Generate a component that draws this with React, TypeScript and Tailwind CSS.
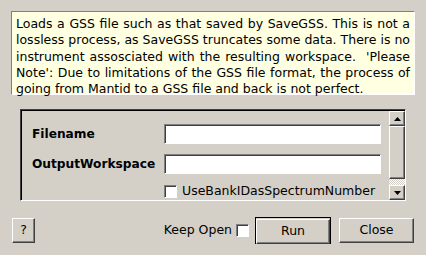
export default function App() {
  const raised =
    "border border-t-white border-l-white border-b-[#404040] border-r-[#404040] shadow-[inset_-1px_-1px_0_#808080]"
  const sunken =
    "border border-t-[#808080] border-l-[#808080] border-b-white border-r-white shadow-[inset_1px_1px_0_#404040]"

  return (
    <div
      className="w-[426px] h-[255px] bg-[#d4d0c8] text-black overflow-hidden flex flex-col"
      style={{ fontFamily: '"DejaVu Sans", sans-serif' }}
    >
      {/* description */}
      <div className="ml-[11px] mt-[11px] w-[404px] h-[84px] bg-[#ffffe1] border border-t-[#808080] border-l-[#808080] border-b-white border-r-white px-[4px] pt-[4px]">
        <p className="text-[12.5px] leading-[16.3px] text-justify">
          Loads a GSS file such as that saved by SaveGSS. This is not a lossless process, as SaveGSS truncates some
          data. There is no instrument assosciated with the resulting workspace.&nbsp; 'Please Note': Due to
          limitations of the GSS file format, the process of going from Mantid to a GSS file and back is not perfect.
        </p>
      </div>

      {/* properties */}
      <div className="ml-[20px] mt-[14px] w-[386px] h-[92px] border border-t-[#404040] border-l-[#404040] border-b-white border-r-white flex">
        <div className="flex-1 border-t border-l border-t-black border-l-black flex flex-col pl-[10px] pt-[13px] gap-[10px]">
          <div className="flex items-center h-[20px]">
            <span className="w-[132px] text-[12.2px] font-bold">Filename</span>
            <div className={`w-[217px] h-[20px] bg-white ${sunken}`} />
          </div>
          <div className="flex items-center h-[20px]">
            <span className="w-[132px] text-[12.2px] font-bold">OutputWorkspace</span>
            <div className={`w-[217px] h-[20px] bg-white ${sunken}`} />
          </div>
          <div className="flex items-center h-[14px] ml-[132px]">
            <div className={`w-[13px] h-[13px] bg-white ${sunken}`} />
            <span className="ml-[5px] text-[12.5px]">UseBankIDasSpectrumNumber</span>
          </div>
        </div>
        {/* scrollbar */}
        <div className="w-[16px] border-t border-t-black flex flex-col">
          <div className={`h-[15px] bg-[#d4d0c8] flex items-center justify-center ${raised}`}>
            <svg width="7" height="4" viewBox="0 0 7 4">
              <path d="M3.5 0 L7 4 L0 4 Z" fill="#000" />
            </svg>
          </div>
          <div className={`h-[53px] bg-[#d4d0c8] ${raised}`} />
          <div className="flex-1 bg-[repeating-conic-gradient(#ffffff_0_25%,#d4d0c8_0_50%)] bg-[length:2px_2px]" />
          <div className={`h-[15px] bg-[#d4d0c8] flex items-center justify-center ${raised}`}>
            <svg width="7" height="4" viewBox="0 0 7 4">
              <path d="M0 0 L7 0 L3.5 4 Z" fill="#000" />
            </svg>
          </div>
        </div>
      </div>

      {/* buttons */}
      <div className="flex items-center mt-[16px] pl-[12px] pr-[12px]">
        <button className={`w-[23px] h-[25px] bg-[#d4d0c8] text-[12.5px] ${raised}`}>?</button>
        <div className="flex-1" />
        <span className="text-[12.5px]">Keep Open</span>
        <div className={`ml-[4px] w-[13px] h-[13px] bg-white ${sunken}`} />
        <div className="ml-[6px] w-[76px] h-[27px] border border-black">
          <button className={`w-full h-full bg-[#d4d0c8] text-[12.5px] ${raised}`}>Run</button>
        </div>
        <button className={`ml-[8px] w-[75px] h-[25px] bg-[#d4d0c8] text-[12.5px] ${raised}`}>Close</button>
      </div>
    </div>
  )
}
